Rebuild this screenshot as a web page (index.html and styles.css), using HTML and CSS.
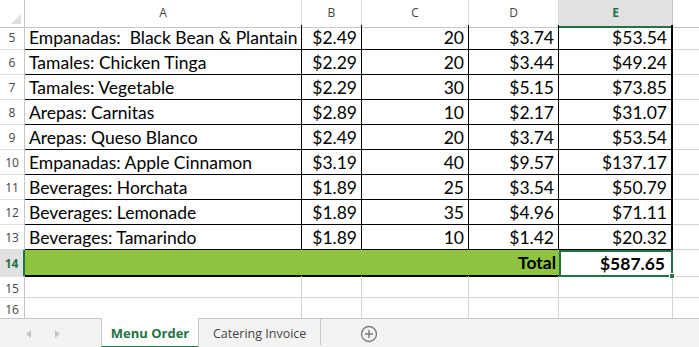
FILE: index.html
```html
<!DOCTYPE html>
<html lang="en">
<head>
    <meta charset="UTF-8">
    <title>Menu Order</title>
    <link rel="stylesheet" href="styles.css">
</head>
<body>
    <div class="sheet">
        <div class="row head-row">
            <div class="corner"><span class="corner-tri"></span></div>
            <div class="col-hd">A</div>
            <div class="col-hd">B</div>
            <div class="col-hd">C</div>
            <div class="col-hd">D</div>
            <div class="col-hd selected">E</div>
            <div class="col-hd blank"></div>
        </div>

        <div class="row data">
            <div class="row-hd">5</div>
            <div class="cell item">Empanadas:&nbsp; Black Bean &amp; Plantain</div>
            <div class="cell num">$2.49</div>
            <div class="cell num">20</div>
            <div class="cell num">$3.74</div>
            <div class="cell num last">$53.54</div>
            <div class="cell empty"></div>
        </div>
        <div class="row data">
            <div class="row-hd">6</div>
            <div class="cell item">Tamales: Chicken Tinga</div>
            <div class="cell num">$2.29</div>
            <div class="cell num">20</div>
            <div class="cell num">$3.44</div>
            <div class="cell num last">$49.24</div>
            <div class="cell empty"></div>
        </div>
        <div class="row data">
            <div class="row-hd">7</div>
            <div class="cell item">Tamales: Vegetable</div>
            <div class="cell num">$2.29</div>
            <div class="cell num">30</div>
            <div class="cell num">$5.15</div>
            <div class="cell num last">$73.85</div>
            <div class="cell empty"></div>
        </div>
        <div class="row data">
            <div class="row-hd">8</div>
            <div class="cell item">Arepas: Carnitas</div>
            <div class="cell num">$2.89</div>
            <div class="cell num">10</div>
            <div class="cell num">$2.17</div>
            <div class="cell num last">$31.07</div>
            <div class="cell empty"></div>
        </div>
        <div class="row data">
            <div class="row-hd">9</div>
            <div class="cell item">Arepas: Queso Blanco</div>
            <div class="cell num">$2.49</div>
            <div class="cell num">20</div>
            <div class="cell num">$3.74</div>
            <div class="cell num last">$53.54</div>
            <div class="cell empty"></div>
        </div>
        <div class="row data">
            <div class="row-hd">10</div>
            <div class="cell item">Empanadas: Apple Cinnamon</div>
            <div class="cell num">$3.19</div>
            <div class="cell num">40</div>
            <div class="cell num">$9.57</div>
            <div class="cell num last">$137.17</div>
            <div class="cell empty"></div>
        </div>
        <div class="row data">
            <div class="row-hd">11</div>
            <div class="cell item">Beverages: Horchata</div>
            <div class="cell num">$1.89</div>
            <div class="cell num">25</div>
            <div class="cell num">$3.54</div>
            <div class="cell num last">$50.79</div>
            <div class="cell empty"></div>
        </div>
        <div class="row data">
            <div class="row-hd">12</div>
            <div class="cell item">Beverages: Lemonade</div>
            <div class="cell num">$1.89</div>
            <div class="cell num">35</div>
            <div class="cell num">$4.96</div>
            <div class="cell num last">$71.11</div>
            <div class="cell empty"></div>
        </div>
        <div class="row data">
            <div class="row-hd">13</div>
            <div class="cell item">Beverages: Tamarindo</div>
            <div class="cell num">$1.89</div>
            <div class="cell num">10</div>
            <div class="cell num">$1.42</div>
            <div class="cell num last">$20.32</div>
            <div class="cell empty"></div>
        </div>

        <div class="row total">
            <div class="row-hd selected">14</div>
            <div class="cell fill">Total</div>
            <div class="cell num strong active">$587.65<span class="handle"></span></div>
            <div class="cell empty"></div>
        </div>

        <div class="row blank-row">
            <div class="row-hd">15</div>
            <div class="cell"></div>
            <div class="cell"></div>
            <div class="cell"></div>
            <div class="cell"></div>
            <div class="cell"></div>
            <div class="cell empty"></div>
        </div>
        <div class="row blank-row">
            <div class="row-hd">16</div>
            <div class="cell"></div>
            <div class="cell"></div>
            <div class="cell"></div>
            <div class="cell"></div>
            <div class="cell"></div>
            <div class="cell empty"></div>
        </div>

        <div class="tabs">
            <div class="nav-arrows">
                <span class="arrow left"></span>
                <span class="arrow right"></span>
            </div>
            <div class="tab active-tab">Menu Order</div>
            <div class="tab">Catering Invoice</div>
            <div class="add-sheet">
                <svg width="18" height="18" viewBox="0 0 18 18">
                    <circle cx="9" cy="9" r="7.5" fill="none" stroke="#7a7a7a" stroke-width="1.3"/>
                    <path d="M9 5v8M5 9h8" stroke="#7a7a7a" stroke-width="1.4"/>
                </svg>
            </div>
        </div>
    </div>
</body>
</html>
```

FILE: styles.css
```css
:root {
    --grid-line: #d4d4d4;
    --head-line: #c6c6c6;
    --excel-green: #217346;
    --fill-green: #8dc33f;
    --head-text: #444;
    --cell-font: "Lato", "Liberation Sans", sans-serif;
    --ui-font: "Open Sans", "Noto Sans", sans-serif;
}

* {
    box-sizing: border-box;
    margin: 0;
    padding: 0;
}

body {
    width: 699px;
    height: 347px;
    overflow: hidden;
    background: #fff;
    font-family: var(--cell-font);
}

.sheet {
    display: flex;
    flex-direction: column;
    height: 347px;
}

.row {
    display: grid;
    grid-template-columns: 25px 277px 60px 107px 90px 114px 1fr;
}

/* column headers */
.head-row {
    height: 25px;
}

.corner,
.col-hd {
    border-bottom: 1px solid var(--head-line);
    border-right: 1px solid #dadada;
    background: #fff;
}

.corner {
    position: relative;
    border-right-color: var(--head-line);
}

.corner-tri {
    position: absolute;
    right: 3px;
    bottom: 3px;
    width: 0;
    height: 0;
    border-left: 10px solid transparent;
    border-bottom: 10px solid #dfdfdf;
}

.col-hd {
    font-family: var(--ui-font);
    font-size: 12px;
    color: var(--head-text);
    text-align: center;
    line-height: 26px;
}

.col-hd.selected {
    background: #e1e1e1;
    color: var(--excel-green);
    font-weight: 700;
    border-bottom: 2px solid var(--excel-green);
    border-right-color: #c6c6c6;
}

.col-hd.blank {
    border-right: none;
}

/* row headers */
.row-hd {
    font-family: var(--ui-font);
    font-size: 12px;
    color: var(--head-text);
    text-align: center;
    border-right: 1px solid var(--head-line);
    border-bottom: 1px solid #e1e1e1;
    padding-top: 4px;
}

.row-hd.selected {
    background: #e1e1e1;
    color: var(--excel-green);
    font-weight: 700;
    border-right: 2px solid var(--excel-green);
    padding-top: 5px;
}

/* cells */
.data {
    height: 25px;
}

.cell {
    font-size: 17.5px;
    line-height: 25px;
    padding: 0 4px;
    white-space: nowrap;
    overflow: hidden;
    color: #000;
    border-right: 1px solid var(--grid-line);
    border-bottom: 1px solid var(--grid-line);
}

.data .cell {
    border-color: #000;
}

.data .cell.last {
    border-right-width: 2px;
}

.data .cell.empty,
.total .cell.empty {
    border-right: none;
    border-bottom-color: var(--grid-line);
}

.num {
    text-align: right;
}

.total {
    height: 26px;
}

.total .row-hd {
    border-bottom: 1px solid #e1e1e1;
}

.fill {
    grid-column: span 4;
    background: var(--fill-green);
    font-weight: 700;
    text-align: right;
    border-right: none;
    border-bottom: 2px solid #000;
    padding-right: 3px;
}

.strong {
    font-weight: 700;
    padding-right: 6px;
}

.active {
    position: relative;
    border: 2px solid var(--excel-green);
    line-height: 23px;
    overflow: visible;
}

.handle {
    position: absolute;
    right: -4px;
    bottom: -4px;
    width: 6px;
    height: 6px;
    background: var(--excel-green);
    border: 1px solid #fff;
}

.blank-row {
    height: 21px;
}

.blank-row .cell.empty {
    border-right: none;
}

/* sheet tabs */
.tabs {
    flex: 1;
    display: flex;
    align-items: stretch;
    background: #f3f3f3;
    border-top: 1px solid #c6c6c6;
    font-family: var(--ui-font);
    font-size: 13px;
}

.nav-arrows {
    width: 101px;
    display: flex;
    align-items: center;
    gap: 24px;
    padding-left: 26px;
}

.arrow {
    width: 0;
    height: 0;
    border-top: 4px solid transparent;
    border-bottom: 4px solid transparent;
}

.arrow.left {
    border-right: 5px solid #c6c6c6;
}

.arrow.right {
    border-left: 5px solid #c6c6c6;
}

.tab {
    padding: 4px 14px 0 14px;
    color: #444;
    font-size: 12.5px;
    line-height: 22px;
    border-right: 1px solid #c6c6c6;
    margin: 0 0 4px;
}

.active-tab {
    width: 98px;
    padding: 4px 0 0;
    margin: -1px 0 0;
    text-align: center;
    background: #fff;
    color: var(--excel-green);
    font-size: 13px;
    font-weight: 700;
    border-left: 1px solid #c6c6c6;
    border-right: 1px solid #c6c6c6;
    border-bottom: 3px solid var(--excel-green);
}

.add-sheet {
    display: flex;
    align-items: center;
    padding-left: 39px;
}
```
